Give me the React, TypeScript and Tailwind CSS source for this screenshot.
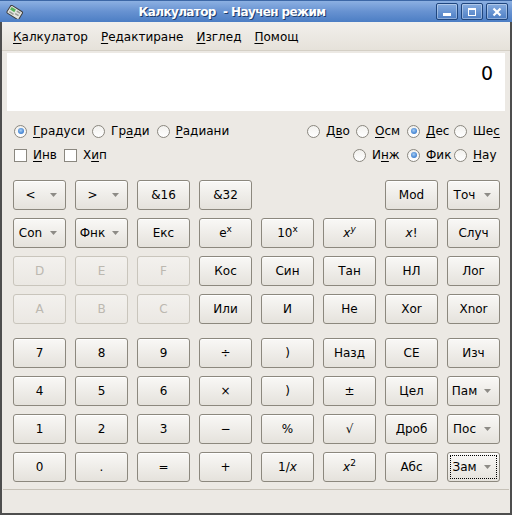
import React from "react";

type Cell = {
  l?: React.ReactNode;
  dis?: boolean;
  drop?: boolean;
  focus?: boolean;
} | null;

const I = ({ children }: { children: React.ReactNode }) => <i className="italic">{children}</i>;
const Sup = ({ children }: { children: React.ReactNode }) => (
  <sup className="text-[9px]">{children}</sup>
);

const U = ({ children }: { children: React.ReactNode }) => (
  <span className="underline underline-offset-[2px] decoration-1">{children}</span>
);

const rowsA: Cell[][] = [
  [{ l: "<", drop: true }, { l: ">", drop: true }, { l: "&16" }, { l: "&32" }, null, null, { l: "Mod" }, { l: "Точ", drop: true }],
  [
    { l: "Con", drop: true },
    { l: "Фнк", drop: true },
    { l: "Екс" },
    { l: <>e<Sup>x</Sup></> },
    { l: <>10<Sup>x</Sup></> },
    { l: <><I>x</I><Sup><I>y</I></Sup></> },
    { l: <><I>x</I>!</> },
    { l: "Случ" },
  ],
  [{ l: "D", dis: true }, { l: "E", dis: true }, { l: "F", dis: true }, { l: "Кос" }, { l: "Син" }, { l: "Тан" }, { l: "НЛ" }, { l: "Лог" }],
  [{ l: "A", dis: true }, { l: "B", dis: true }, { l: "C", dis: true }, { l: "Или" }, { l: "И" }, { l: "Не" }, { l: "Xor" }, { l: "Xnor" }],
];

const rowsB: Cell[][] = [
  [{ l: "7" }, { l: "8" }, { l: "9" }, { l: "÷" }, { l: ")" }, { l: "Назд" }, { l: "CE" }, { l: "Изч" }],
  [{ l: "4" }, { l: "5" }, { l: "6" }, { l: "×" }, { l: ")" }, { l: "±" }, { l: "Цел" }, { l: "Пам", drop: true }],
  [{ l: "1" }, { l: "2" }, { l: "3" }, { l: "−" }, { l: "%" }, { l: "√" }, { l: "Дроб" }, { l: "Пос", drop: true }],
  [
    { l: "0" },
    { l: "." },
    { l: "=" },
    { l: "+" },
    { l: <>1/<I>x</I></> },
    { l: <><I>x</I><Sup>2</Sup></> },
    { l: "Абс" },
    { l: "Зам", drop: true, focus: true },
  ],
];

const Arrow = () => (
  <svg width="7" height="4" viewBox="0 0 7 4" className="ml-[4px] mr-[8px] shrink-0">
    <path d="M0 0H7L3.5 4Z" fill="#8d8b86" />
  </svg>
);

function Btn({ c }: { c: Cell }) {
  if (!c) return <div />;
  const base = c.dis
    ? "border-[#c9c5bc] from-[#f3f1ee] to-[#ebe8e3] text-[#bcb8b0]"
    : "border-[#8c887e] from-[#f9f8f6] to-[#e5e2dc] text-black shadow-[inset_0_1px_0_#ffffff]";
  return (
    <div
      className={`relative h-[30px] rounded-[3px] border bg-gradient-to-b ${base} text-[12px] leading-none flex items-center justify-center`}
    >
      {c.drop ? (
        <div className="flex items-center w-full">
          <span className="flex-1 text-center pl-[1px]">{c.l}</span>
          <Arrow />
        </div>
      ) : (
        <span className="pb-[1px]">{c.l}</span>
      )}
      {c.focus && <div className="absolute inset-[2px] border border-dotted border-black pointer-events-none" />}
    </div>
  );
}

function Radio({ on }: { on?: boolean }) {
  return (
    <div className="w-[13px] h-[13px] rounded-full border border-[#8a877f] bg-gradient-to-b from-[#f2f1ee] to-white flex items-center justify-center shrink-0">
      {on && <div className="w-[6px] h-[6px] rounded-full bg-[radial-gradient(circle_at_45%_40%,#a7cdf2_0%,#4b8ad6_60%,#2f6bbd_100%)]" />}
    </div>
  );
}

function Check() {
  return <div className="w-[13px] h-[13px] border border-[#8a877f] bg-white shrink-0" />;
}

function RItem({ on, w, children }: { on?: boolean; w: string; children: React.ReactNode }) {
  return (
    <div className={`flex items-center gap-[6px] ${w}`}>
      <Radio on={on} />
      <span>{children}</span>
    </div>
  );
}

function TitleBtn({ children }: { children: React.ReactNode }) {
  return (
    <div className="w-[22px] h-[17px] rounded-[2px] border border-[#1f467e] bg-gradient-to-b from-[#86acdf] to-[#4d7ec4] shadow-[inset_0_0_0_1px_rgba(255,255,255,0.35)] flex items-center justify-center">
      {children}
    </div>
  );
}

export default function App() {
  return (
    <div className="w-[512px] h-[515px] flex flex-col bg-[#ece9e4] font-['DejaVu_Sans',sans-serif] text-[12px] text-black overflow-hidden">
      {/* Title bar */}
      <div className="h-[22px] shrink-0 flex items-center bg-gradient-to-b from-[#8cb0e2] via-[#6792d1] to-[#4c7ec4] border-t border-[#3c67a6]">
        <div className="w-[28px] pl-[6px] flex items-center">
          <svg width="18" height="14" viewBox="0 0 18 14">
            <g transform="rotate(32 9 7)">
              <rect x="2" y="3" width="14" height="9" rx="1.5" fill="#e4e4df" stroke="#3d3d3d" strokeWidth="1" />
              <rect x="3.5" y="4.5" width="5" height="3" fill="#58b35a" />
              <rect x="10" y="4.5" width="4" height="1.5" fill="#9a9a94" />
              <rect x="10" y="7.5" width="4" height="1.5" fill="#9a9a94" />
              <rect x="4" y="9" width="5" height="1.5" fill="#9a9a94" />
            </g>
          </svg>
        </div>
        <div className="flex-1 text-center text-white font-bold text-[12px] tracking-[-0.6px] [text-shadow:1px_1px_0_#1d3c6b] whitespace-pre">
          Калкулатор  - Научен режим
        </div>
        <div className="flex gap-[3px] pr-[4px]">
          <TitleBtn>
            <svg width="10" height="10" viewBox="0 0 10 10">
              <rect x="1" y="6" width="8" height="3" fill="#fff" />
            </svg>
          </TitleBtn>
          <TitleBtn>
            <svg width="10" height="10" viewBox="0 0 10 10">
              <rect x="1.5" y="1.5" width="7" height="7" fill="none" stroke="#fff" strokeWidth="1" />
              <rect x="1" y="1" width="8" height="2" fill="#fff" />
            </svg>
          </TitleBtn>
          <TitleBtn>
            <svg width="10" height="10" viewBox="0 0 10 10">
              <path d="M1.5 1.5L8.5 8.5M8.5 1.5L1.5 8.5" stroke="#fff" strokeWidth="2.2" />
            </svg>
          </TitleBtn>
        </div>
      </div>

      {/* Body */}
      <div className="flex-1 flex flex-col border-l-2 border-r-2 border-b-2 border-[#4e4e4e]">
        {/* Menu bar */}
        <div className="h-[29px] shrink-0 flex items-center gap-[13px] pl-[11px] pt-[2px] bg-gradient-to-b from-[#f2f0ec] to-[#e6e2da] border-b border-[#d4cfc5]">
          <span><U>К</U>алкулатор</span>
          <span><U>Р</U>едактиране</span>
          <span><U>И</U>зглед</span>
          <span><U>П</U>омощ</span>
        </div>

        {/* Display */}
        <div className="mx-[5px] mt-[2px] h-[58px] shrink-0 bg-white flex justify-end pr-[12px] pt-[8px]">
          <span className="text-[19px] leading-[24px]">0</span>
        </div>

        {/* Radios */}
        <div className="mt-[8px] flex flex-col">
          <div className="h-[24px] flex items-center justify-between pl-[12px] pr-[13px]">
            <div className="flex items-center gap-[7px]">
              <div className="flex items-center gap-[6px]"><Radio on /><span><U>Г</U>радуси</span></div>
              <div className="flex items-center gap-[6px]"><Radio /><span>Гр<U>а</U>ди</span></div>
              <div className="flex items-center gap-[6px]"><Radio /><span><U>Р</U>адиани</span></div>
            </div>
            <div className="flex items-center">
              <RItem w="w-[49px]">Д<U>в</U>о</RItem>
              <RItem w="w-[51px]"><U>О</U>см</RItem>
              <RItem w="w-[47px]" on><U>Д</U>ес</RItem>
              <RItem w="w-[43px]">Ше<U>с</U></RItem>
            </div>
          </div>
          <div className="h-[24px] flex items-center justify-between pl-[12px] pr-[13px]">
            <div className="flex items-center gap-[7px]">
              <div className="flex items-center gap-[6px]"><Check /><span><U>И</U>нв</span></div>
              <div className="flex items-center gap-[6px]"><Check /><span>Х<U>и</U>п</span></div>
            </div>
            <div className="flex items-center">
              <RItem w="w-[54px]">И<U>н</U>ж</RItem>
              <RItem w="w-[47px]" on><U>Ф</U>ик</RItem>
              <RItem w="w-[43px]"><U>Н</U>ау</RItem>
            </div>
          </div>
        </div>

        {/* Buttons */}
        <div className="mt-[13px] pl-[11px] flex flex-col">
          <div className="grid grid-cols-[repeat(8,53px)] gap-x-[9px] gap-y-[8px]">
            {rowsA.flat().map((c, i) => (
              <Btn key={i} c={c} />
            ))}
          </div>
          <div className="mt-[14px] grid grid-cols-[repeat(8,53px)] gap-x-[9px] gap-y-[8px]">
            {rowsB.flat().map((c, i) => (
              <Btn key={i} c={c} />
            ))}
          </div>
        </div>

        {/* Status bar */}
        <div className="mt-[7px] mx-[1px] border-t border-[#c6c1b7]" />
        <div className="flex-1" />
      </div>
    </div>
  );
}
